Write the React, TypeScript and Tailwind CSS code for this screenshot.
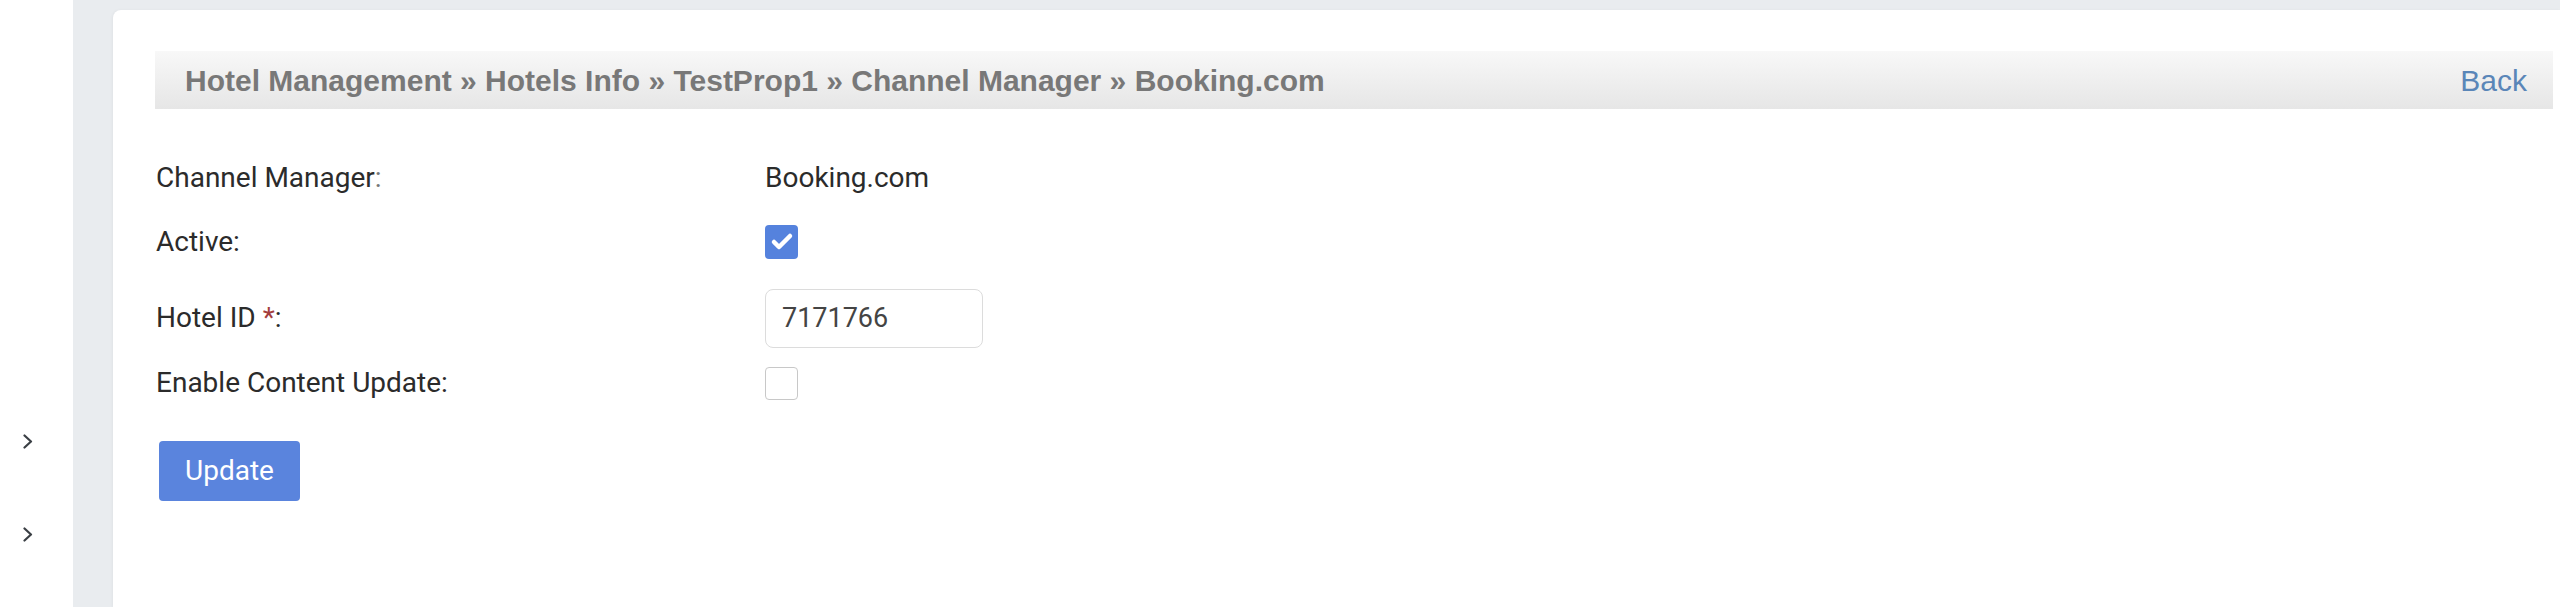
import { Check } from "lucide-react";

function Chevron() {
  return (
    <svg width="12" height="15" viewBox="0 0 12 15" fill="none">
      <polyline points="2.5,1.5 9,7.5 2.5,13.5" stroke="#3a3f44" strokeWidth="2.2" strokeLinecap="round" strokeLinejoin="round" />
    </svg>
  );
}

function Label({ children }: { children: React.ReactNode }) {
  return <div className="w-[609px] shrink-0 text-[28px] text-[#2b2b2b]">{children}</div>;
}

export default function App() {
  return (
    <div className="flex h-[607px] w-[2560px] overflow-hidden bg-white font-['Roboto',sans-serif]">
      {/* sidebar */}
      <aside className="flex w-[73px] shrink-0 flex-col items-start bg-white pl-[22px] pt-[434px]">
        <Chevron />
        <div className="mt-[78px]">
          <Chevron />
        </div>
      </aside>

      {/* main */}
      <main className="flex flex-1 bg-[#e9ecef] pl-[40px] pt-[10px]">
        <div className="flex-1 rounded-tl-[8px] bg-white pl-[42px] pr-[7px] pt-[41px] shadow-[-1px_0_3px_rgba(0,0,0,0.04)]">
          {/* breadcrumb bar */}
          <div className="flex h-[58px] items-center justify-between bg-gradient-to-b from-[#f8f8f8] to-[#e6e6e6] pl-[30px] pr-[26px] font-['Liberation_Sans',Arial,sans-serif] text-[30px]">
            <span className="font-bold text-[#787878]">
              Hotel Management » Hotels Info » TestProp1 » Channel Manager » Booking.com
            </span>
            <a className="text-[#5a86b8]">Back</a>
          </div>

          {/* form */}
          <div className="pl-[1px]">
            <div className="mt-[41px] flex h-[56px] items-center">
              <Label>
                Channel Manager<span className="text-[#777]">:</span>
              </Label>
              <span className="text-[28px] text-[#2b2b2b]">Booking.com</span>
            </div>
            <div className="flex h-[72px] items-center">
              <Label>Active:</Label>
              <span className="flex h-[34px] w-[33px] items-center justify-center rounded-[4px] bg-[#5582dd]">
                <Check size={24} strokeWidth={4.5} color="#fff" />
              </span>
            </div>
            <div className="flex h-[80px] items-center">
              <Label>
                Hotel ID <span className="text-[#a33d3d]">*</span>:
              </Label>
              <input
                readOnly
                value="7171766"
                className="h-[59px] w-[218px] rounded-[8px] border-[1.5px] border-[#dcdcdc] pl-[16px] text-[27px] text-[#444] outline-none"
              />
            </div>
            <div className="flex h-[50px] items-center">
              <Label>Enable Content Update:</Label>
              <span className="h-[33px] w-[33px] rounded-[4px] border-[1.5px] border-[#c8c8c8] bg-white" />
            </div>
            <button className="ml-[3px] mt-[33px] h-[60px] w-[141px] rounded-[4px] bg-[#5a84dd] text-[28px] text-white">
              Update
            </button>
          </div>
        </div>
      </main>
    </div>
  );
}
